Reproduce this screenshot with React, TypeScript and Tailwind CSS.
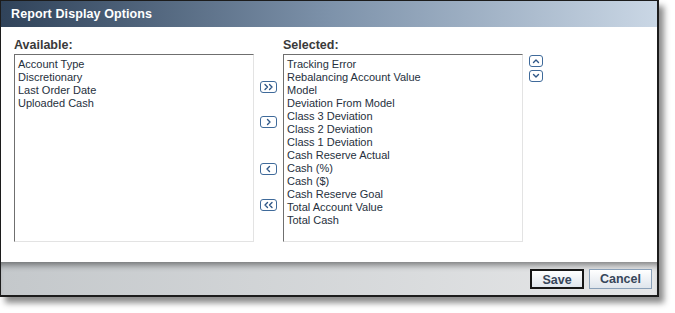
import type { ReactNode } from 'react';

const AVAILABLE = ['Account Type', 'Discretionary', 'Last Order Date', 'Uploaded Cash'];

const SELECTED = [
  'Tracking Error',
  'Rebalancing Account Value',
  'Model',
  'Deviation From Model',
  'Class 3 Deviation',
  'Class 2 Deviation',
  'Class 1 Deviation',
  'Cash Reserve Actual',
  'Cash (%)',
  'Cash ($)',
  'Cash Reserve Goal',
  'Total Account Value',
  'Total Cash',
];

// small rounded icon button with chevrons drawn in svg
function ArrowButton({ children, w = 17 }: { children: ReactNode; w?: number }) {
  return (
    <button type="button" className="block leading-none">
      <svg width={w} height={12} viewBox={`0 0 ${w} 12`}>
        <rect x="0.5" y="0.5" width={w - 1} height="11" rx="2.5" fill="#fff" stroke="#3f6a9a" />
        <g fill="none" stroke="#2f5787" strokeWidth="1.4" strokeLinecap="round" strokeLinejoin="round">
          {children}
        </g>
      </svg>
    </button>
  );
}

function ListBox({ items }: { items: string[] }) {
  return (
    <div className="w-[240px] h-[188px] bg-white border-t border-l border-t-[#6f6f6f] border-l-[#6f6f6f] border-r border-b border-r-[#e3e3e3] border-b-[#e3e3e3] pl-[3px] pt-[3px]">
      {items.map((item) => (
        <div key={item} className="text-[11px] leading-[13px] text-[#26303d] whitespace-nowrap">
          {item}
        </div>
      ))}
    </div>
  );
}

export default function App() {
  return (
    <div className="w-[675px] h-[313px] bg-white font-['Liberation_Sans',Arial,sans-serif]">
      <div className="w-[659px] h-[297px] border border-[#1c1c1c] border-r-2 border-b-2 flex flex-col shadow-[5px_6px_6px_rgba(0,0,0,0.45)]">
        <div className="h-[26px] bg-gradient-to-r from-[#30435a] via-[#7d92aa] to-[#cad7e5] pl-[10px] flex items-center">
          <span className="text-white font-bold text-[12.5px] tracking-[0.1px]">Report Display Options</span>
        </div>

        <div className="flex-1 bg-white pl-[13px] pt-[9px] flex">
          <div>
            <div className="h-[18px] leading-[18px] text-[12.5px] font-bold text-[#3a3a3a]">Available:</div>
            <ListBox items={AVAILABLE} />
          </div>

          <div className="w-[29px] pt-[45px] flex flex-col items-center">
            <ArrowButton>
              <path d="M5 3.5 L7.5 6 L5 8.5 M9.5 3.5 L12 6 L9.5 8.5" />
            </ArrowButton>
            <div className="mt-[23px]">
              <ArrowButton>
                <path d="M7.5 3.5 L10 6 L7.5 8.5" />
              </ArrowButton>
            </div>
            <div className="mt-[35px]">
              <ArrowButton>
                <path d="M9.5 3.5 L7 6 L9.5 8.5" />
              </ArrowButton>
            </div>
            <div className="mt-[24px]">
              <ArrowButton>
                <path d="M7.5 3.5 L5 6 L7.5 8.5 M12 3.5 L9.5 6 L12 8.5" />
              </ArrowButton>
            </div>
          </div>

          <div>
            <div className="h-[18px] leading-[18px] text-[12.5px] font-bold text-[#3a3a3a]">Selected:</div>
            <ListBox items={SELECTED} />
          </div>

          <div className="pl-[6px] pt-[19px] flex flex-col gap-[3px]">
            <ArrowButton w={14}>
              <path d="M4.5 7.5 L7 5 L9.5 7.5" />
            </ArrowButton>
            <ArrowButton w={14}>
              <path d="M4.5 4.5 L7 7 L9.5 4.5" />
            </ArrowButton>
          </div>
        </div>

        <div className="h-[33px] bg-gradient-to-r from-[#c4c8cb] to-[#e6e7e8] shadow-[inset_0_7px_6px_-4px_rgba(0,0,0,0.45)] flex items-center justify-end gap-[5px] pr-[5px] pt-[1px]">
          <button
            type="button"
            className="w-[54px] h-[20px] border-2 border-[#161616] bg-gradient-to-b from-white to-[#dfe5ec] text-[12.5px] font-bold text-[#37465a]"
          >
            Save
          </button>
          <button
            type="button"
            className="w-[63px] h-[20px] border border-[#8aa0b8] bg-gradient-to-b from-white to-[#dfe5ec] text-[12.5px] font-bold text-[#37465a]"
          >
            Cancel
          </button>
        </div>
      </div>
    </div>
  );
}
